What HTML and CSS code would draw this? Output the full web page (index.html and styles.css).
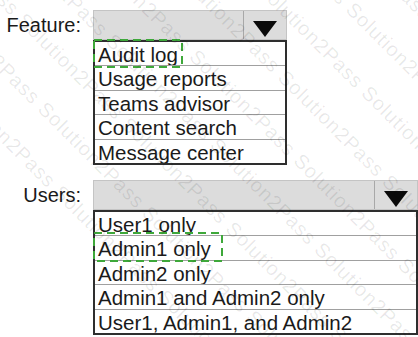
FILE: index.html
```html
<!DOCTYPE html>
<html>
<head>
  <title>Feature and users</title>
  <link rel="stylesheet" href="styles.css">
</head>
<body>
  <div class="page">
    <div class="field">
      <div class="label">Feature:</div>
      <div class="control feature">
        <div class="select">
          <div class="select-value"></div>
          <div class="select-arrow"><span class="triangle"></span></div>
        </div>
        <ul class="options">
          <li class="answer">Audit log</li>
          <li>Usage reports</li>
          <li>Teams advisor</li>
          <li>Content search</li>
          <li>Message center</li>
        </ul>
        <svg class="mark mark-feature" width="90" height="29">
          <rect x="1" y="1" width="88" height="27" fill="none" stroke="#3ea83a" stroke-width="2" stroke-dasharray="8 5"/>
        </svg>
      </div>
    </div>

    <div class="field users-field">
      <div class="label">Users:</div>
      <div class="control users">
        <div class="select">
          <div class="select-value"></div>
          <div class="select-arrow"><span class="triangle"></span></div>
        </div>
        <ul class="options">
          <li>User1 only</li>
          <li class="answer">Admin1 only</li>
          <li>Admin2 only</li>
          <li>Admin1 and Admin2 only</li>
          <li>User1, Admin1, and Admin2</li>
        </ul>
        <svg class="mark mark-users" width="130" height="30">
          <rect x="1" y="1" width="128" height="28" fill="none" stroke="#3ea83a" stroke-width="2" stroke-dasharray="8 5"/>
        </svg>
      </div>
    </div>
  </div>

  <!-- watermark over the whole picture -->
  <div class="watermark">
    <div class="wm-lines">
      <p>Solution2Pass Solution2Pass Solution2Pass Solution2Pass Solution2Pass Solution2Pass</p>
      <p>Solution2Pass Solution2Pass Solution2Pass Solution2Pass Solution2Pass Solution2Pass</p>
      <p>Solution2Pass Solution2Pass Solution2Pass Solution2Pass Solution2Pass Solution2Pass</p>
      <p>Solution2Pass Solution2Pass Solution2Pass Solution2Pass Solution2Pass Solution2Pass</p>
      <p>Solution2Pass Solution2Pass Solution2Pass Solution2Pass Solution2Pass Solution2Pass</p>
      <p>Solution2Pass Solution2Pass Solution2Pass Solution2Pass Solution2Pass Solution2Pass</p>
      <p>Solution2Pass Solution2Pass Solution2Pass Solution2Pass Solution2Pass Solution2Pass</p>
      <p>Solution2Pass Solution2Pass Solution2Pass Solution2Pass Solution2Pass Solution2Pass</p>
      <p>Solution2Pass Solution2Pass Solution2Pass Solution2Pass Solution2Pass Solution2Pass</p>
      <p>Solution2Pass Solution2Pass Solution2Pass Solution2Pass Solution2Pass Solution2Pass</p>
      <p>Solution2Pass Solution2Pass Solution2Pass Solution2Pass Solution2Pass Solution2Pass</p>
      <p>Solution2Pass Solution2Pass Solution2Pass Solution2Pass Solution2Pass Solution2Pass</p>
    </div>
  </div>
</body>
</html>
```

FILE: styles.css
```css
body {
  margin: 0;
  background-color: #ffffff;
  font-family: "Liberation Sans", Arial, sans-serif;
  color: #1a1a1a;
  overflow: hidden;
}

.page {
  padding-top: 10px;
}

.field {
  display: flex;
  align-items: flex-start;
}

.users-field {
  margin-top: 15px;
}

.label {
  width: 81px;
  padding-right: 12px;
  height: 30px;
  line-height: 30px;
  font-size: 20px;
  text-align: right;
}

.control {
  position: relative;
}

.feature {
  width: 194px;
}

.users {
  width: 325px;
}

.select {
  display: flex;
  height: 30px;
  box-sizing: border-box;
  background-color: #dcdcdc;
  border: 1px solid #c4c4c4;
}

.select-value {
  flex: 1;
}

.select-arrow {
  width: 43px;
  border-left: 1px solid #a8a8a8;
  display: flex;
  justify-content: center;
  padding-top: 10px;
  box-sizing: border-box;
}

.triangle {
  width: 0;
  height: 0;
  border-left: 12px solid transparent;
  border-right: 12px solid transparent;
  border-top: 16px solid #0a0a0a;
}

.options {
  list-style: none;
  margin: 0;
  padding: 0;
  border: 2px solid #2e2e2e;
  background-color: #ffffff;
}

.options li {
  height: 23.4px;
  line-height: 25px;
  padding-left: 3px;
  font-size: 20.5px;
  white-space: nowrap;
  overflow: hidden;
}

.options li + li {
  border-top: 1px solid #a0a0a0;
}

/* dashed answer marks */
.mark {
  position: absolute;
  left: 0;
  display: block;
}

.mark-feature {
  top: 29px;
}

.mark-users {
  top: 52px;
}

.watermark {
  position: absolute;
  left: 0;
  top: 0;
  width: 418px;
  height: 337px;
  overflow: hidden;
  pointer-events: none;
}

.wm-lines {
  position: absolute;
  left: -250px;
  top: -330px;
  width: 900px;
  transform: rotate(45deg);
  transform-origin: center;
}

.wm-lines p {
  margin: 0;
  height: 48px;
  line-height: 48px;
  font-size: 20px;
  white-space: nowrap;
  color: rgba(0, 0, 0, 0.09);
  letter-spacing: 1px;
}

.wm-lines p:nth-child(even) {
  padding-left: 70px;
}
```
